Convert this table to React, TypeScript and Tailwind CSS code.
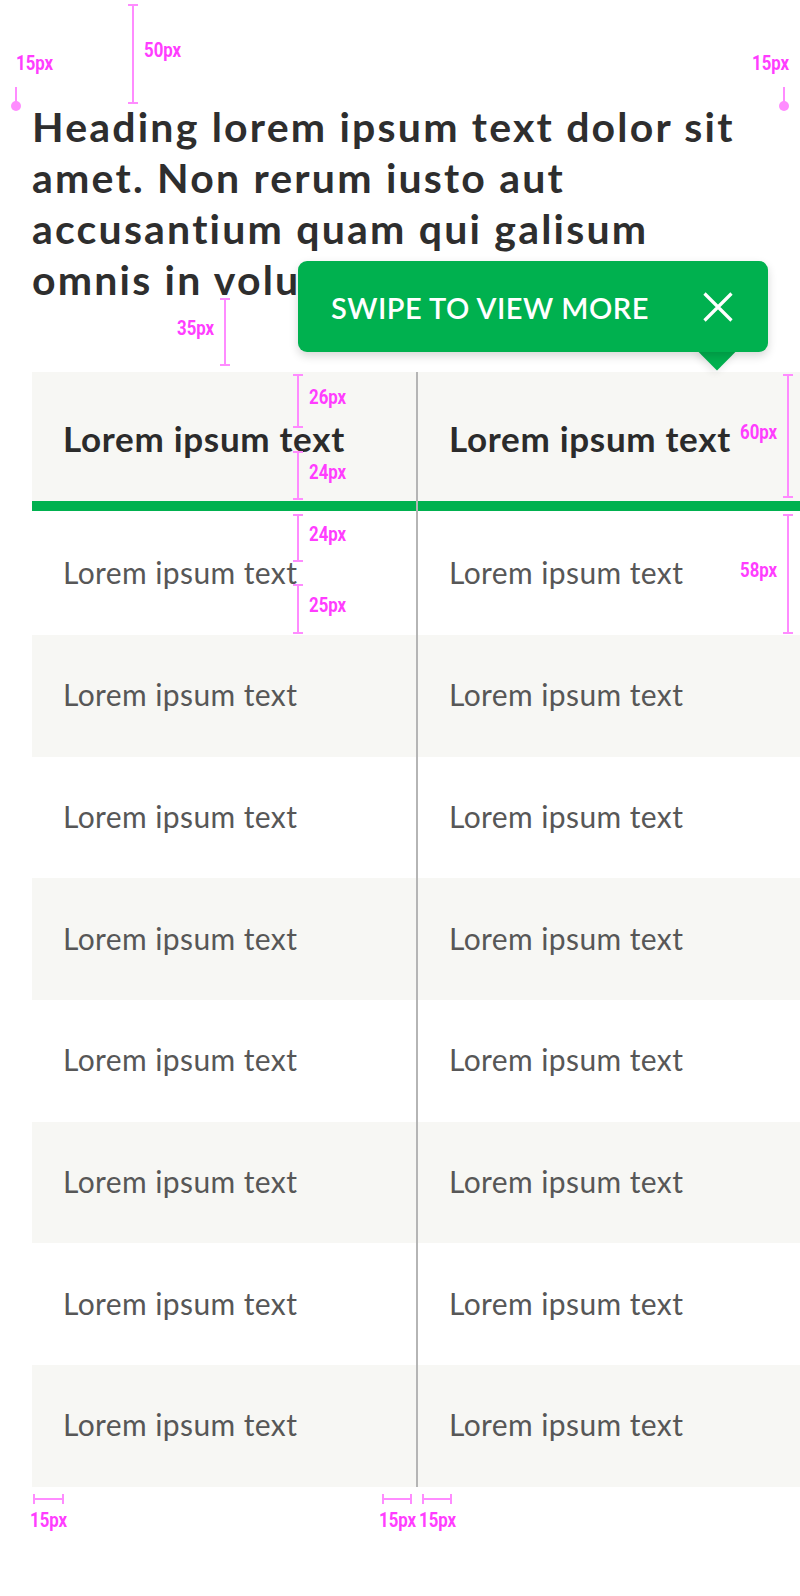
const rowCount = 8

const pink = "bg-[#ff8cff]"

function Tag({ text }: { text: string }) {
  return (
    <span className="inline-block w-[37px] text-[20px] leading-[20px] font-bold whitespace-nowrap text-[#ff3dff] [font-family:Roboto,sans-serif]">
      <span className="inline-block origin-left scale-x-[0.84]">{text}</span>
    </span>
  )
}

// vertical bracket with its label on the left or right
function VDim({
  x,
  top,
  bottom,
  label,
  side = "right",
}: {
  x: number
  top: number
  bottom: number
  label: string
  side?: "left" | "right"
}) {
  const bracket = (
    <div className="flex w-[10px] flex-col items-center self-stretch">
      <div className={`h-[2px] w-[10px] ${pink}`} />
      <div className={`w-[2px] flex-1 ${pink}`} />
      <div className={`h-[2px] w-[10px] ${pink}`} />
    </div>
  )
  return (
    <div
      className={`absolute flex items-center gap-[6px] ${side === "left" ? "flex-row-reverse" : ""}`}
      style={{ top, height: bottom - top, ...(side === "left" ? { right: 800 - x - 5 } : { left: x - 5 }) }}
    >
      {bracket}
      <div className="-mt-[6px]">
        <Tag text={label} />
      </div>
    </div>
  )
}

function HDim({ left, right }: { left: number; right: number }) {
  return (
    <div className="absolute top-[1494px] flex flex-col items-center gap-[6px]" style={{ left, width: right - left }}>
      <div className="flex h-[10px] w-full items-center">
        <div className={`h-[10px] w-[2px] ${pink}`} />
        <div className={`h-[2px] flex-1 ${pink}`} />
        <div className={`h-[10px] w-[2px] ${pink}`} />
      </div>
      <Tag text="15px" />
    </div>
  )
}

function Pin({ side }: { side: "left" | "right" }) {
  return (
    <div
      className={`absolute top-[52px] flex flex-col gap-[11px] ${
        side === "left" ? "left-[11px] items-start" : "right-[11px] items-end"
      }`}
    >
      <div className={side === "left" ? "pl-[5px]" : ""}>
        <Tag text="15px" />
      </div>
      <div className="flex w-[10px] flex-col items-center">
        <div className={`h-[16px] w-[2px] ${pink}`} />
        <div className={`-mt-[2px] h-[10px] w-[10px] rounded-full ${pink}`} />
      </div>
    </div>
  )
}

function TableColumn() {
  return (
    <div className="flex w-[384px] shrink-0 flex-col">
      <div className="h-[129px] bg-[#f7f7f4] px-[31px] pt-[45px]">
        <span className="block text-[35px] leading-[42px] font-bold tracking-[0.7px] text-[#2b2b2b]">
          Lorem ipsum text
        </span>
      </div>
      <div className="h-[10px] bg-[#00b14f]" />
      {Array.from({ length: rowCount }).map((_, i) => (
        <div
          key={i}
          className={`flex items-center px-[31px] pb-[3px] ${i === 0 ? "h-[124px]" : "h-[121.7px]"} ${
            i % 2 === 1 ? "bg-[#f7f7f4]" : "bg-white"
          }`}
        >
          <span className="text-[30px] leading-[36px] tracking-[0.4px] text-[#575757]">Lorem ipsum text</span>
        </div>
      ))}
    </div>
  )
}

export default function App() {
  return (
    <div className="relative h-[1596px] w-[800px] overflow-hidden bg-white [font-family:Lato,'Noto_Sans',sans-serif]">
      <div className="pt-[101px] pl-[32px]">
        <h1 className="w-[736px] text-[41px] leading-[51px] font-bold tracking-[2.2px] text-[#2e2e2e]">
          Heading lorem ipsum text dolor sit amet. Non rerum iusto aut accusantium quam qui galisum omnis in
          voluptatem.
        </h1>

        <div className="mt-[67px] flex">
          <TableColumn />
          <div className="w-[2px] shrink-0 bg-[#b5b5b5]" />
          <TableColumn />
        </div>
      </div>

      {/* swipe hint */}
      <div className="absolute top-[261px] left-[298px] h-[91px] w-[470px]">
        <div className="absolute top-[78px] left-[406px] h-[26px] w-[26px] rotate-45 bg-[#00b14f] shadow-[0_3px_8px_rgba(0,0,0,0.12)]" />
        <div className="relative flex h-full items-center justify-between rounded-[9px] bg-[#00b14f] pr-[35px] pl-[33px] shadow-[0_4px_10px_rgba(0,0,0,0.16)]">
          <span className="pt-[2px] text-[29px] font-semibold tracking-[0.5px] text-white">SWIPE TO VIEW MORE</span>
          <svg width="30" height="30" viewBox="0 0 30 30" className="text-white">
            <path d="M1.5 1.5 28.5 28.5M28.5 1.5 1.5 28.5" stroke="currentColor" strokeWidth="3.2" />
          </svg>
        </div>
      </div>

      {/* redline annotations */}
      <Pin side="left" />
      <Pin side="right" />

      <VDim x={133} top={4} bottom={104} label="50px" />
      <VDim x={225} top={298} bottom={366} label="35px" side="left" />

      <VDim x={298} top={374} bottom={428} label="26px" />
      <VDim x={298} top={451} bottom={500} label="24px" />
      <VDim x={298} top={514} bottom={562} label="24px" />
      <VDim x={298} top={584} bottom={634} label="25px" />

      <VDim x={788} top={374} bottom={498} label="60px" side="left" />
      <VDim x={788} top={514} bottom={634} label="58px" side="left" />

      <HDim left={33} right={64} />
      <HDim left={382} right={412} />
      <HDim left={422} right={452} />
    </div>
  )
}
